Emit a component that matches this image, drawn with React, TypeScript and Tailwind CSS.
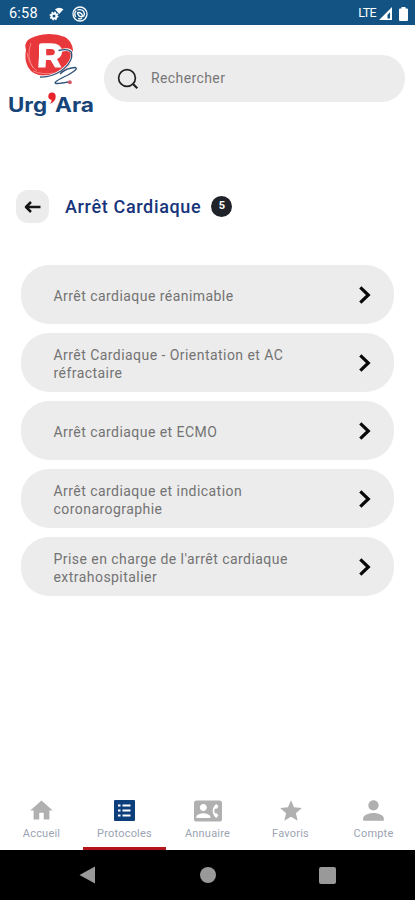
import type { ReactNode } from "react";
import { MdContactPhone, MdHome, MdPerson, MdStar } from "react-icons/md";
import clsx from "clsx";

const protocols = [
  ["Arrêt cardiaque réanimable"],
  ["Arrêt Cardiaque - Orientation et AC", "réfractaire"],
  ["Arrêt cardiaque et ECMO"],
  ["Arrêt cardiaque et indication", "coronarographie"],
  ["Prise en charge de l'arrêt cardiaque", "extrahospitalier"],
];

function StatusBar() {
  return (
    <div className="flex h-[25px] items-center bg-[#125384] pl-[9px] pr-[7px] text-white">
      <span className="w-[40px] pt-[3px] text-[14.5px] leading-none tracking-[0.2px]">6:58</span>
      <svg className="mt-[2px] h-[14px] w-[15px]" viewBox="0 0 15 14">
        <circle cx="5" cy="9" r="2.5" fill="none" stroke="#fff" strokeWidth="2" />
        <circle cx="5" cy="9" r="3.8" fill="none" stroke="#fff" strokeWidth="1.4" strokeDasharray="1.5 1.48" />
        <path d="M6 2.3Q10 -1 14.5 2.3L10.2 7Z" fill="#fff" />
      </svg>
      <svg className="ml-[8px] mt-[2px] h-[16px] w-[16px]" viewBox="0 0 16 16" fill="none" stroke="#fff">
        <circle cx="8" cy="8" r="7" strokeWidth="1.3" />
        <path d="M3.8 10.8A5 5 0 0 1 4.2 4.6M5.3 4Q9 2.7 11.6 5.2Q13 7.5 11.5 10.6M6.1 12.3Q8 13.3 10 12.4" strokeWidth="1.3" />
        <path d="M5 7Q7.8 5.5 9.8 8.2L11 11M5.3 7.2L7.3 10.2L10.2 11" strokeWidth="1.4" />
      </svg>
      <span className="ml-auto pt-[2px] text-[12.5px] leading-none tracking-[-0.6px]">LTE</span>
      <svg className="ml-[3px] mt-[2px] h-[13px] w-[13px]" viewBox="0 0 13 13">
        <path fillRule="evenodd" d="M0 13L13 0V13ZM8.5 11.5H11V5.2L8.5 7.8Z" fill="#fff" />
      </svg>
      <svg className="ml-[7px] mt-[2px] h-[14px] w-[9px]" viewBox="0 0 9 14">
        <path d="M2.5 0H6.5V1.5H8Q9 1.5 9 2.5V13Q9 14 8 14H1Q0 14 0 13V2.5Q0 1.5 1 1.5H2.5Z" fill="#fff" />
      </svg>
    </div>
  );
}

function Logo() {
  return (
    <svg className="h-[92px] w-[104px] shrink-0" viewBox="0 25 104 92">
      <path
        d="M28 40Q33 36 43 34.5Q55 33 65 37Q72 41 73 50Q74 61 66 69Q57 76 45 75.5Q33 76 28 67Q24 59 26 50Q24 44 28 40Z"
        fill="#e8383c"
      />
      <path d="M27 53Q29 65 37 71M31 43Q26 57 33 68M33 71Q42 75 54 73" fill="none" stroke="#f58a86" strokeWidth="0.9" />
      <path
        fillRule="evenodd"
        d="M39 45.5Q39 43.3 41.5 43.3H51Q62 43.5 62 51.5Q62 57 57 59L61.5 67.5H55L50.5 60H46L45.5 67.5H38.2L39 56ZM46.2 49V55.3H51Q54.8 55 54.8 52.2Q54.8 49 51 49Z"
        fill="#fff"
      />
      <path d="M61 50.5Q70 48 72 53Q73 62 62 70Q52 77 43 77" fill="none" stroke="#fff" strokeWidth="2.6" />
      <path
        d="M58.5 50.5Q68 48 71.3 52Q74 61 61 71Q51 77.5 40 77M60 74Q67 67.5 75.5 67.5Q79 69 67 75.5Q53 82 55.5 83.3Q59 84 68 82"
        fill="none"
        stroke="#2d5278"
        strokeWidth="1.3"
      />
      <circle cx="69.8" cy="82.2" r="2" fill="#d2586a" />
      <g className="fill-[#174579] text-[19.5px] font-bold" fontFamily="Inter, sans-serif">
        <text x="8" y="112" textLength="39" lengthAdjust="spacingAndGlyphs">
          Urg
        </text>
        <text x="55" y="112" textLength="39" lengthAdjust="spacingAndGlyphs">
          Ara
        </text>
      </g>
      <path d="M52 92.5Q55.7 92.5 55.7 96.5Q55.7 101.5 50 104Q52 101 51.5 99.7Q48.3 99.3 48.3 96.2Q48.5 92.5 52 92.5Z" fill="#e82329" />
    </svg>
  );
}

function SearchBar() {
  return (
    <div className="mt-[30px] flex h-[47px] w-[301px] items-center rounded-[23px] bg-[#ececec] pl-[13px]">
      <svg className="h-[22px] w-[22px]" viewBox="0 0 22 22" fill="none" stroke="#222" strokeWidth="1.7">
        <circle cx="10" cy="10" r="8.4" />
        <path d="M15.8 15.8L20.3 20.3" strokeWidth="2.2" />
      </svg>
      <span className="ml-[12px] text-[14px] tracking-[0.4px] text-[#777]">Rechercher</span>
    </div>
  );
}

function ProtocolRow({ lines }: { lines: string[] }) {
  return (
    <div className="flex h-[59px] items-center justify-between rounded-[28px] bg-[#ececec] pl-[32.5px] pr-[23px]">
      <div className="pt-[2px] text-[14px] leading-[18px] tracking-[0.45px] text-[#737373]">
        {lines.map((line) => (
          <p key={line} className="whitespace-nowrap">
            {line}
          </p>
        ))}
      </div>
      <svg className="h-[18px] w-[12px]" viewBox="0 0 12 18" fill="none" stroke="#080808" strokeWidth="3.2">
        <path d="M1.3 1.3L9.3 9L1.3 16.7" />
      </svg>
    </div>
  );
}

interface TabProps {
  label: string;
  icon: ReactNode;
  active?: boolean;
}

function Tab({ label, icon, active }: TabProps) {
  return (
    <div
      className={clsx(
        "flex w-[83px] flex-col items-center border-b-[3px] pt-[13px]",
        active ? "border-[#b51519] text-[#0d3f7d]" : "border-transparent text-[#b0b0b0]"
      )}
    >
      <div className="flex h-[25px] items-center">{icon}</div>
      <span className="mt-[4px] text-[11px] leading-[14px] tracking-[0.2px] text-[#9ba3b2]">{label}</span>
    </div>
  );
}

function ListIcon() {
  return (
    <svg className="h-[21px] w-[21px]" viewBox="0 0 21 21">
      <rect width="21" height="21" rx="1" fill="currentColor" />
      <path d="M4 5.5H6.5M4 10.5H6.5M4 15.5H6.5M8.5 5.5H16.5M8.5 10.5H16.5M8.5 15.5H16.5" stroke="#fff" strokeWidth="2.2" />
    </svg>
  );
}

function AndroidNav() {
  return (
    <div className="flex h-[50px] items-center justify-between bg-black px-[79px]">
      <svg className="h-[18px] w-[17px]" viewBox="0 0 17 18">
        <path d="M16 0.5V17.5L0.5 9Z" fill="#999" />
      </svg>
      <div className="h-[16px] w-[16px] rounded-full bg-[#999]" />
      <div className="h-[17px] w-[17px] rounded-[2px] bg-[#999]" />
    </div>
  );
}

export default function App() {
  return (
    <div className="flex h-[900px] w-[415px] flex-col overflow-hidden bg-white font-[Roboto,sans-serif]">
      <StatusBar />
      <header className="flex h-[92px]">
        <Logo />
        <SearchBar />
      </header>
      <div className="mt-[73px] flex h-[33px] items-center pl-[16px]">
        <div className="flex h-[33px] w-[33px] items-center justify-center rounded-[12px] bg-[#ececec]">
          <svg className="h-[12px] w-[17px]" viewBox="0 0 17 12" fill="none" stroke="#151515" strokeWidth="2.5" strokeLinejoin="round">
            <path d="M16.5 6H2M7 1L2 6L7 11" />
          </svg>
        </div>
        <h1 className="ml-[16px] text-[18px] font-medium tracking-[0.65px] text-[#17357b]">Arrêt Cardiaque</h1>
        <span className="ml-[10px] flex h-[21px] w-[21px] items-center justify-center rounded-full bg-[#202329] text-[11px] font-bold text-white">
          5
        </span>
      </div>
      <main className="ml-[21px] mt-[42px] flex w-[373px] flex-col gap-[9px]">
        {protocols.map((lines) => (
          <ProtocolRow key={lines[0]} lines={lines} />
        ))}
      </main>
      <nav className="mt-auto flex h-[65px]">
        <Tab label="Accueil" icon={<MdHome size={27} />} />
        <Tab label="Protocoles" icon={<ListIcon />} active />
        <Tab label="Annuaire" icon={<MdContactPhone size={28} />} />
        <Tab label="Favoris" icon={<MdStar size={26} />} />
        <Tab label="Compte" icon={<MdPerson size={31} />} />
      </nav>
      <AndroidNav />
    </div>
  );
}
